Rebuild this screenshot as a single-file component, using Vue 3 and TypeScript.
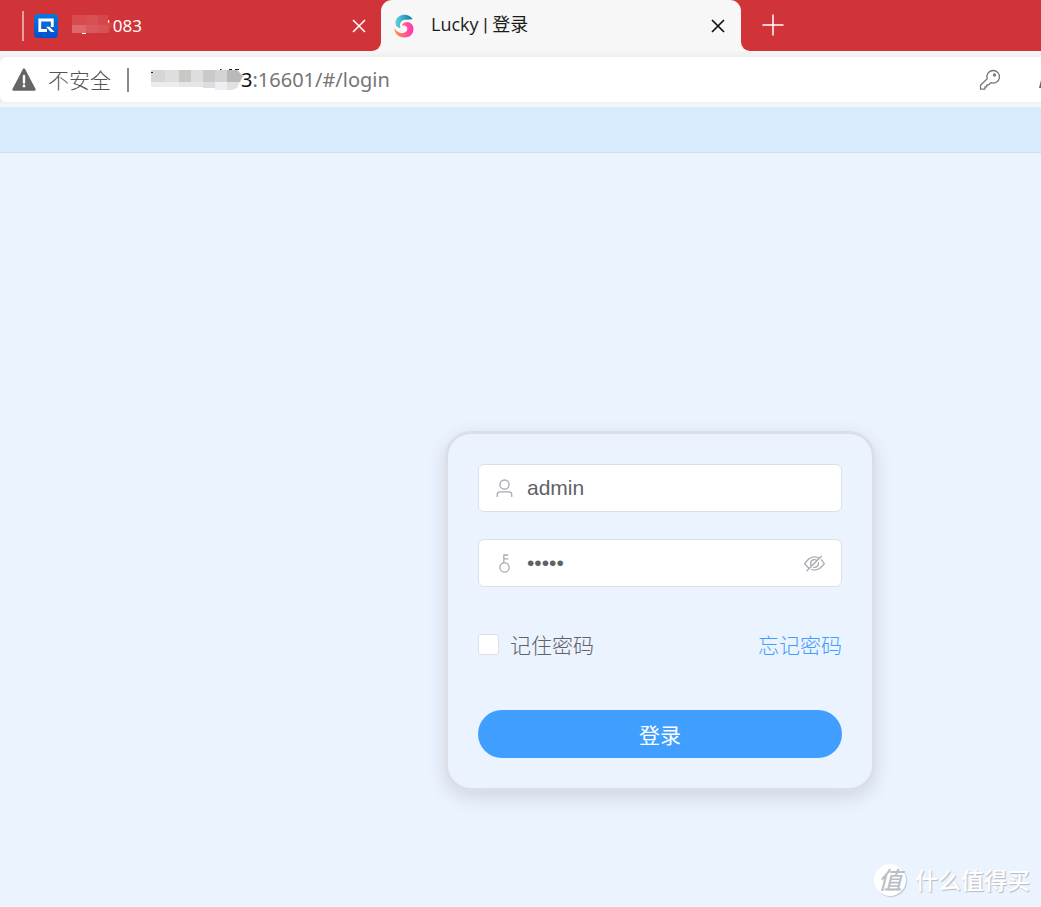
<script setup lang="ts">
import { ref } from 'vue'

interface Tile {
  x: number
  y: number
  w: number
  h: number
  fill: string
}

const username = ref('admin')
const password = ref('admin')
const remember = ref(false)
const revealed = ref(false)

const tabTiles: Tile[] = [
  { x: 0, y: 0, w: 14, h: 10, fill: '#d84a4e' },
  { x: 14, y: 0, w: 12, h: 10, fill: '#d65054' },
  { x: 26, y: 0, w: 10, h: 16, fill: '#d5474c' },
  { x: 0, y: 10, w: 14, h: 8, fill: '#de676b' },
  { x: 14, y: 10, w: 14, h: 8, fill: '#da585c' },
  { x: 26, y: 10, w: 10, h: 8, fill: '#d85256' },
]

const hostTiles: Tile[] = [
  { x: 0, y: 0, w: 14, h: 12, fill: '#d6d5d7' },
  { x: 14, y: 0, w: 14, h: 12, fill: '#dedee0' },
  { x: 28, y: 0, w: 12, h: 12, fill: '#c9c8c5' },
  { x: 40, y: 0, w: 12, h: 12, fill: '#dededf' },
  { x: 52, y: 0, w: 12, h: 12, fill: '#c9cacb' },
  { x: 64, y: 0, w: 12, h: 12, fill: '#d4d4d5' },
  { x: 0, y: 12, w: 28, h: 5, fill: '#eeeded' },
  { x: 28, y: 12, w: 24, h: 5, fill: '#e6e6e5' },
  { x: 52, y: 12, w: 12, h: 6, fill: '#dcdde0' },
  { x: 64, y: 12, w: 12, h: 8, fill: '#f0eef0' },
]
</script>

<template>
  <div class="window">
    <header class="tabs">
      <div class="tab-back">
        <span class="divider"></span>
        <svg class="q-logo" viewBox="0 0 24 24" aria-hidden="true">
          <defs>
            <linearGradient id="qbg" x1="0" y1="0" x2="0" y2="1">
              <stop offset="0" stop-color="#0878e0" />
              <stop offset="1" stop-color="#0450cf" />
            </linearGradient>
          </defs>
          <rect width="24" height="24" rx="4" fill="url(#qbg)" />
          <path d="M13 16.500H5.800V6H18.300V13" fill="none" stroke="#fff" stroke-width="2.800" />
          <path d="M12 12.800h3.500l5 5.200h-3.600z" fill="#fff" />
        </svg>
        <span class="back-title">
          <svg class="tab-mosaic" viewBox="0 0 41 20" aria-hidden="true">
            <rect v-for="(t, i) in tabTiles" :key="i" :x="t.x" :y="t.y" :width="t.w" :height="t.h" :fill="t.fill" />
            <path d="M36 8h5l-4 10h-1z" fill="#d5474c" />
            <path d="M10 18.500h4" stroke="#fff" stroke-width="1" />
          </svg>
          <span class="back-text">1083</span>
        </span>
        <button class="close light" type="button" aria-label="关闭标签页">
          <svg viewBox="0 0 14 14"><path d="M1 1l12 12M13 1L1 13" /></svg>
        </button>
      </div>
      <div class="tab-shell">
        <div class="tab-active">
          <svg class="lucky-logo" viewBox="0 0 20 24" aria-hidden="true">
            <defs>
              <linearGradient id="lt" x1="0" y1="0" x2="1" y2="0">
                <stop offset="0" stop-color="#63d3df" />
                <stop offset="1" stop-color="#0877a8" />
              </linearGradient>
              <linearGradient id="lb" x1="0" y1="0" x2="1" y2="0">
                <stop offset="0" stop-color="#ff963f" />
                <stop offset=".5" stop-color="#ff6280" />
                <stop offset="1" stop-color="#ff32bd" />
              </linearGradient>
            </defs>
            <path d="M18.500 5C16 1.500 13 .5 10 .8C4.500 1.200 1.200 5 1.500 9.500C1.700 12.300 4 14 6.500 14C5.500 11.500 6 9 7.500 7.300C10 4.500 14 6.500 18.500 5z" fill="url(#lt)" />
            <path d="M.5 14C2.500 18 6 19.700 9.500 19C13 18.300 14.300 15 12.500 12.800C11.500 11.500 9.500 11.200 8 12C8.300 9.500 10.500 8 13.500 8C17 8.200 19.500 11.500 19.500 15C19.500 20 15.500 23.500 10.500 23.500C4.500 23.500 .3 19.500.5 14z" fill="url(#lb)" />
          </svg>
          <span class="active-title">Lucky <span class="pipe">|</span> 登录</span>
          <button class="close" type="button" aria-label="关闭标签页">
            <svg viewBox="0 0 14 14"><path d="M1 1l12 12M13 1L1 13" /></svg>
          </button>
        </div>
      </div>
      <div class="tab-rest">
        <button class="new-tab" type="button" aria-label="新建标签页">
          <svg viewBox="0 0 22 22"><path d="M11 .5v21M.5 11h21" /></svg>
        </button>
      </div>
    </header>

    <div class="toolbar">
      <div class="address">
        <button class="insecure" type="button">
          <svg viewBox="0 0 24 23" aria-hidden="true">
            <path d="M12 1.500L22.500 21.500H1.500z" fill="#666" stroke="#666" stroke-width="2.400" stroke-linejoin="round" />
            <path d="M12 8v6.500" stroke="#fff" stroke-width="2.400" stroke-linecap="round" />
            <circle cx="12" cy="18" r="1.400" fill="#fff" />
          </svg>
          <span>不安全</span>
        </button>
        <span class="bar"></span>
        <span class="url">
          <svg class="host-mosaic" viewBox="0 -2 94 24" aria-hidden="true">
            <rect v-for="(t, i) in hostTiles" :key="i" :x="t.x" :y="t.y" :width="t.w" :height="t.h" :fill="t.fill" />
            <path d="M76 0h10l6 6l-3 6h-13z" fill="#b9b9ba" />
            <path d="M76 12h13l-3 6l-5 2h-5z" fill="#e1e1e3" />
            <path d="M0 2.500h2M69 -.5h1.500M78 -.5h3M84 -.5h4" stroke="#222" stroke-width="1" />
          </svg>
          <span class="host">3</span><span class="path">:16601/#/login</span>
        </span>
        <button class="key" type="button" aria-label="密码">
          <svg viewBox="0 0 22 22">
            <path d="M14 1.500a6.300 6.300 0 1 1-2 12.200l-2.300 2.100H7.800v2H5.900v2.400H1.500v-4l6.700-6.400A6.300 6.300 0 0 1 14 1.500z" />
            <circle cx="15.500" cy="6" r="1" />
          </svg>
        </button>
        <svg class="cut-icon" viewBox="0 0 2 8" aria-hidden="true"><path d="M2 0v8H0z" fill="#666" /></svg>
      </div>
    </div>

    <div class="page-head"></div>

    <main class="page">
      <form class="card" @submit.prevent>
        <label class="field">
          <svg viewBox="0 0 1024 1024" aria-hidden="true">
            <path d="M512 512a192 192 0 1 0 0-384 192 192 0 0 0 0 384zm0 64a256 256 0 1 1 0-512 256 256 0 0 1 0 512zm320 320v-96a96 96 0 0 0-96-96H288a96 96 0 0 0-96 96v96a32 32 0 1 1-64 0v-96a160 160 0 0 1 160-160h448a160 160 0 0 1 160 160v96a32 32 0 1 1-64 0z" />
          </svg>
          <input v-model="username" type="text" aria-label="用户名" autocomplete="username" />
        </label>
        <div class="field">
          <svg viewBox="0 0 1024 1024" aria-hidden="true">
            <path d="M448 456.064V96a32 32 0 0 1 32-32.064L672 64a32 32 0 0 1 0 64H512v128h160a32 32 0 0 1 0 64H512v128a256 256 0 1 1-64 8.064zM512 896a192 192 0 1 0 0-384 192 192 0 0 0 0 384z" />
          </svg>
          <input v-model="password" :type="revealed ? 'text' : 'password'" aria-label="密码" autocomplete="current-password" />
          <button class="reveal" type="button" aria-label="显示密码" @click="revealed = !revealed">
            <svg viewBox="0 0 1024 1024">
              <path d="M876.8 156.8c0-9.6-3.2-16-9.6-22.4-6.4-6.4-12.8-9.6-22.4-9.6-9.6 0-16 3.2-22.4 9.6L736 220.8c-64-32-137.6-51.2-224-60.8-160 16-288 73.6-377.6 176C44.8 438.4 0 496 0 512s48 73.6 134.4 176c22.4 25.6 44.8 48 73.6 67.2l-86.4 89.6c-6.4 6.4-9.6 12.8-9.6 22.4 0 9.6 3.2 16 9.6 22.4 6.4 6.4 12.8 9.6 22.4 9.6 9.6 0 16-3.2 22.4-9.6l704-710.4c3.2-6.4 6.4-12.8 6.4-22.4Zm-646.4 528c-76.8-70.4-128-128-153.6-172.8 28.8-48 80-105.6 153.6-172.8C304 272 400 230.4 512 224c64 3.2 124.8 19.2 176 44.8l-54.4 54.4C598.4 300.8 560 288 512 288c-64 0-115.2 22.4-160 64s-64 96-64 160c0 48 12.8 89.6 35.2 124.8L256 707.2c-9.6-6.4-19.2-16-25.6-22.4Zm140.8-96c-12.8-22.4-19.2-48-19.2-76.8 0-44.8 16-83.2 48-112 32-28.8 67.2-48 112-48 28.8 0 54.4 6.4 73.6 19.2L371.2 588.8ZM889.599 336c-12.8-16-28.8-28.8-41.6-41.6l-48 48c73.6 67.2 124.8 124.8 150.4 169.6-28.8 48-80 105.6-153.6 172.8-73.6 67.2-172.8 108.8-284.8 115.2-51.2-3.2-99.2-12.8-140.8-28.8l-48 48c57.6 22.4 118.4 38.4 188.8 44.8 160-16 288-73.6 377.6-176C979.199 585.6 1024 528 1024 512s-48.001-73.6-134.401-176Z" />
              <path d="M511.998 672c-12.8 0-25.6-3.2-38.4-6.4l-51.2 51.2c28.8 12.8 57.6 19.2 89.6 19.2 64 0 115.2-22.4 160-64 41.6-41.6 64-96 64-160 0-32-6.4-64-19.2-89.6l-51.2 51.2c3.2 12.8 6.4 25.6 6.4 38.4 0 44.8-16 83.2-48 112-32 28.8-67.2 48-112 48Z" />
            </svg>
          </button>
        </div>
        <div class="options">
          <label class="remember">
            <input v-model="remember" type="checkbox" />
            <span>记住密码</span>
          </label>
          <a href="#/forgot">忘记密码</a>
        </div>
        <button class="submit" type="submit">登录</button>
      </form>
    </main>

    <div class="watermark">
      <span class="seal"><span class="seal-text">值</span></span>
      <span>什么值得买</span>
    </div>
  </div>
</template>

<style>
body {
  margin: 0;
  background: #ebf3ff;
}
</style>

<style scoped>
.window {
  position: relative;
  display: flex;
  flex-direction: column;
  min-height: 100vh;
  overflow: hidden;
  background: #ebf3ff;
  font-family: "Noto Sans", "Noto Sans CJK SC", sans-serif;
}
.window * {
  box-sizing: border-box;
}
button {
  padding: 0;
  border: 0;
  background: none;
  font: inherit;
  cursor: pointer;
}
svg {
  display: block;
  flex: none;
}
.tabs {
  display: flex;
  height: 51px;
  background: #f7f7f7;
}
.tab-back {
  display: flex;
  align-items: center;
  flex: 0 0 381px;
  padding: 0 15px 0 22px;
  border-bottom-right-radius: 9px;
  background: #d13438;
}
.divider {
  width: 2px;
  height: 30px;
  margin-right: 10px;
  background: #e9a0a2;
}
.q-logo {
  width: 24px;
  height: 24px;
  margin-right: 14px;
}
.back-title {
  display: flex;
  align-items: center;
  flex: 1;
  color: #fff;
  font-size: 17px;
}
.tab-mosaic {
  position: relative;
  z-index: 1;
  width: 41px;
  height: 20px;
  margin: 0 -10px 2px 0;
}
.close {
  width: 14px;
  height: 14px;
  color: #111;
}
.close svg {
  width: 14px;
  height: 14px;
  fill: none;
  stroke: currentColor;
  stroke-width: 1.7;
}
.close.light {
  color: #fff;
}
.close.light svg {
  stroke-width: 1.5;
}
.tab-shell {
  flex: 0 0 360px;
  background: #d13438;
}
.tab-active {
  display: flex;
  align-items: center;
  height: 100%;
  padding: 0 16px 0 13px;
  border-radius: 11px 11px 0 0;
  background: #f7f7f7;
}
.lucky-logo {
  width: 20px;
  height: 24px;
  margin-right: 17px;
}
.active-title {
  flex: 1;
  color: #1b1b1b;
  font-size: 18px;
  line-height: 24px;
  padding-bottom: 2px;
}
.active-title,
.insecure {
  font-family: "Open Sans", "Noto Sans CJK SC", sans-serif;
}
.pipe {
  font-family: Roboto, sans-serif;
}
.tab-rest {
  display: flex;
  align-items: center;
  flex: 1;
  padding-left: 21px;
  border-bottom-left-radius: 9px;
  background: #d13438;
}
.new-tab {
  padding-bottom: 2px;
}
.new-tab svg {
  width: 22px;
  height: 22px;
  fill: none;
  stroke: #fff;
  stroke-width: 1.5;
}
.toolbar {
  height: 56px;
  padding: 6px 0 5px;
  background: linear-gradient(#f5f5f5, #efefef 6px, #efefef 51px, #f6f6f6 54px);
}
.address {
  display: flex;
  align-items: center;
  height: 45px;
  padding-left: 12px;
  border-radius: 6px 0 0 6px;
  background: #fff;
  color: #666;
  font-size: 21px;
}
.insecure {
  display: flex;
  align-items: center;
  gap: 12px;
  color: #555;
  font-weight: 300;
}
.insecure span {
  padding-bottom: 2px;
}
.insecure svg {
  width: 24px;
  height: 23px;
}
.bar {
  width: 2px;
  height: 24px;
  margin: 0 22px 0 16px;
  background: #8a8a8a;
}
.url {
  display: flex;
  align-items: center;
  flex: 1;
  font-size: 20px;
}
.host-mosaic {
  position: relative;
  z-index: 1;
  width: 94px;
  height: 24px;
  margin-right: -4px;
}
.host {
  color: #111;
}
.path {
  color: #757575;
}
.key svg {
  width: 22px;
  height: 22px;
  fill: none;
  stroke: #777;
  stroke-width: 1.3;
  stroke-linejoin: round;
}
.cut-icon {
  width: 2px;
  height: 8px;
  margin: 8px 0 0 38px;
}
.page-head {
  height: 46px;
  border-bottom: 1px solid #d4dfec;
  background: #d9ebff;
}
.page {
  display: flex;
  justify-content: center;
  align-items: flex-start;
  flex: 1;
  padding: 278px 0 100px 279px;
}
.card {
  display: flex;
  flex-direction: column;
  width: 430px;
  padding: 30px;
  border: 3px solid #dcdfe6;
  border-radius: 26px;
  box-shadow: 0 6px 20px rgba(0, 0, 0, 0.12);
  color: #606266;
  font-size: 21px;
}
.field {
  display: flex;
  align-items: center;
  height: 48px;
  margin-bottom: 27px;
  padding: 0 16px 0 15px;
  border: 1px solid #dcdfe6;
  border-radius: 6px;
  background: #fff;
}
.field svg {
  width: 21px;
  height: 21px;
  fill: #a8abb2;
}
.field input {
  flex: 1;
  min-width: 0;
  height: 32px;
  margin-left: 12px;
  padding: 0;
  border: 0;
  outline: 0;
  background: transparent;
  color: #606266;
  font: 21px "Liberation Sans", sans-serif;
}
.options {
  display: flex;
  align-items: center;
  justify-content: space-between;
  height: 48px;
  margin: 6px 0 42px;
  font-weight: 300;
}
.remember {
  display: flex;
  align-items: center;
  gap: 11px;
}
.remember input {
  appearance: none;
  width: 21px;
  height: 21px;
  margin: 0;
  border: 1px solid #dcdfe6;
  border-radius: 3px;
  background: #fff;
}
.remember input:checked {
  background: #409eff;
}
.options a {
  color: #409eff;
  text-decoration: none;
}
.submit {
  height: 48px;
  border-radius: 24px;
  background: #409eff;
  color: #fff;
}
.watermark {
  position: absolute;
  right: 11px;
  bottom: 9px;
  display: flex;
  align-items: center;
  gap: 9px;
  color: #fff;
  font-size: 23px;
  font-weight: 500;
  line-height: 36px;
  text-shadow: 1px 1px 1px #b4bac2;
}
.seal {
  display: flex;
  align-items: center;
  justify-content: center;
  width: 32px;
  height: 32px;
  border-radius: 50%;
  background: #fff;
  box-shadow: 1px 1px 1px #c0c6ce;
}
.seal-text {
  color: #b9bfc8;
  font-size: 24px;
  font-style: italic;
  text-shadow: none;
}
</style>
